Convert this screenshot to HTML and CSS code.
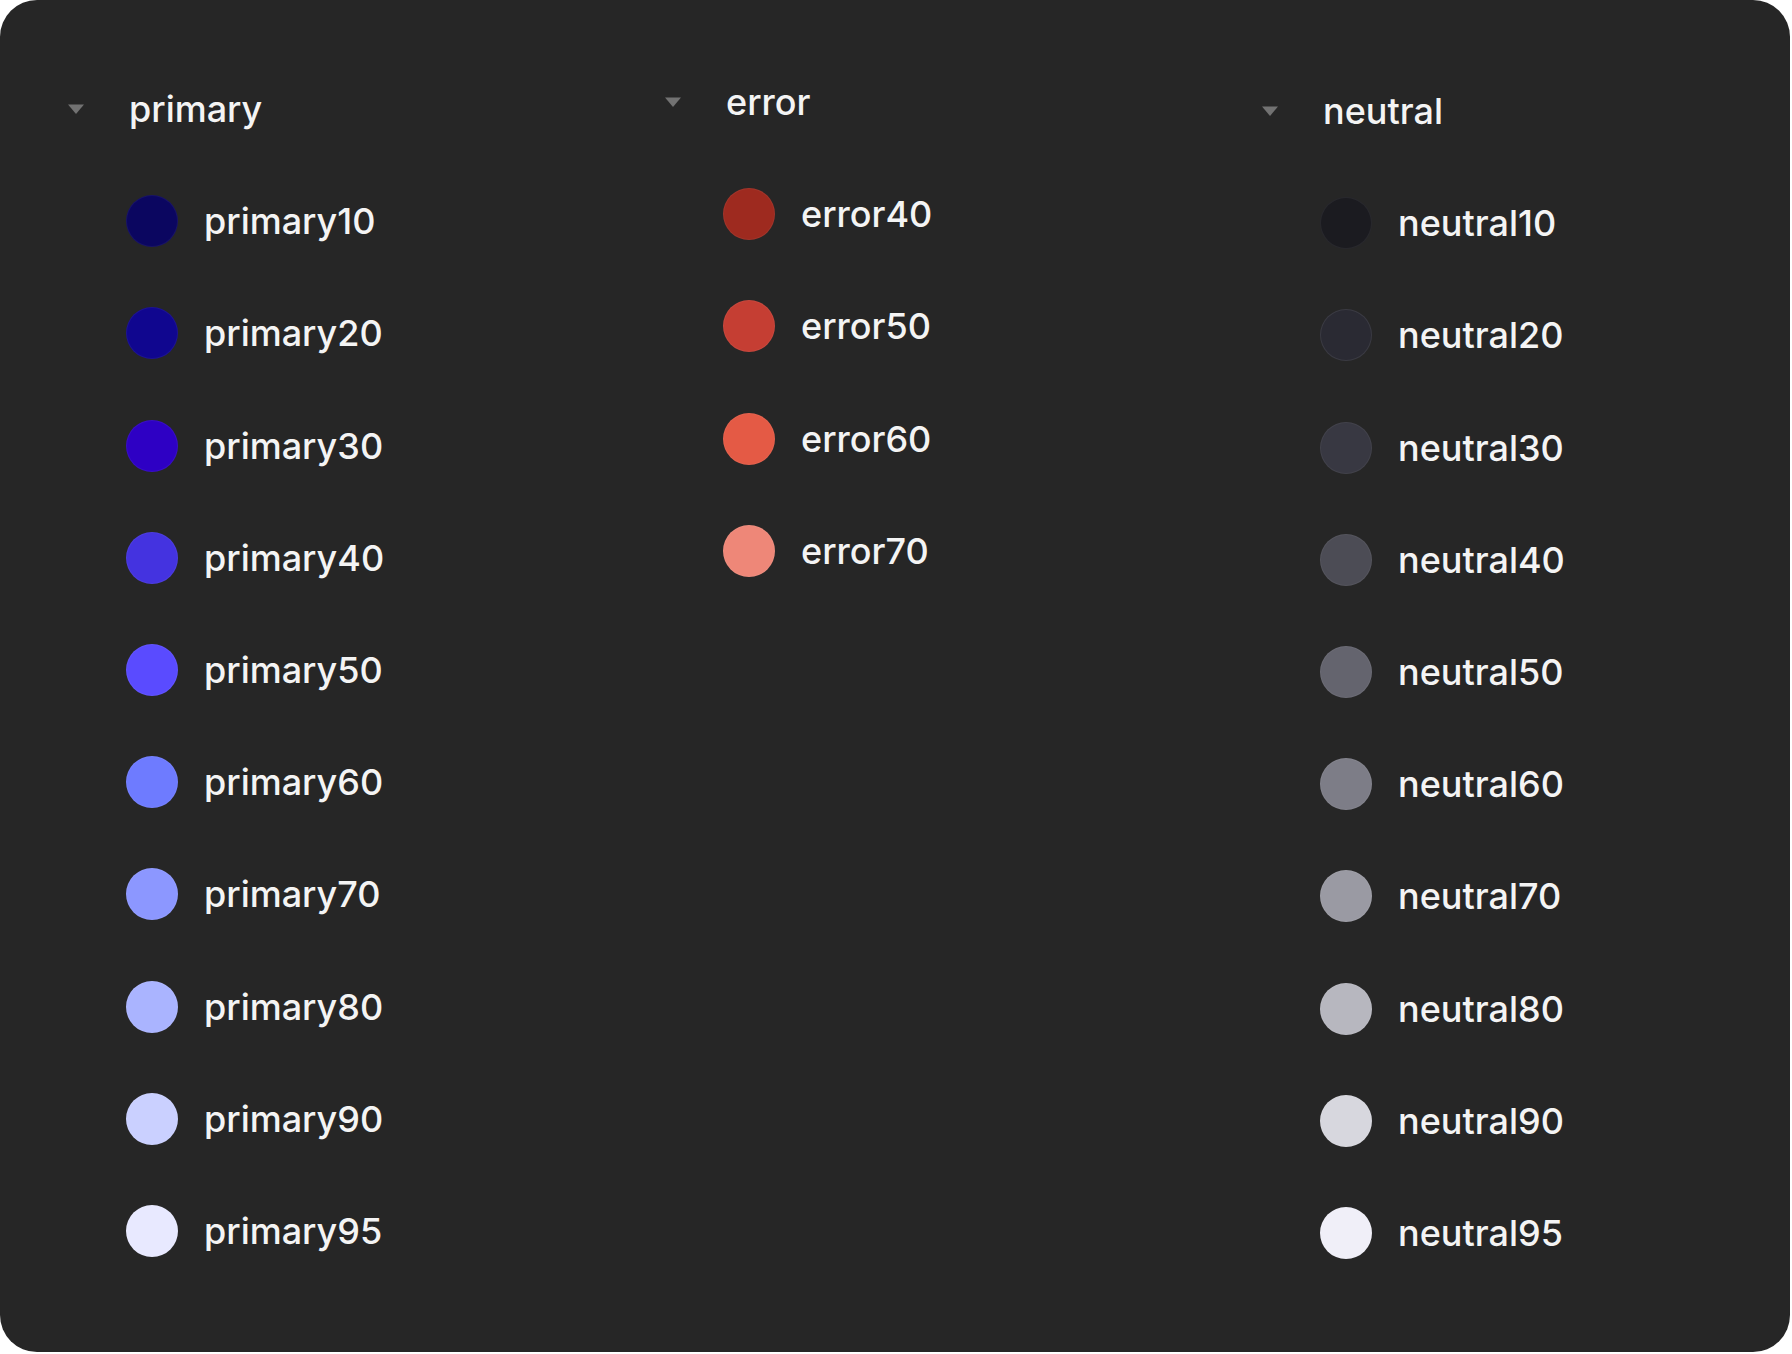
FILE: index.html
```html
<!DOCTYPE html>
<html lang="en">
<head>
<meta charset="utf-8">
<title>Color tokens</title>
<link rel="stylesheet" href="styles.css">
</head>
<body>
<div class="panel">
  <section class="group group-primary">
    <div class="group-head">
      <span class="caret"><svg viewBox="0 0 18 12" width="18" height="12"><polygon points="1,1.5 17,1.5 9,11" fill="#727272"/></svg></span>
      <span class="group-name">primary</span>
    </div>
    <ul class="swatches">
      <li class="swatch"><span class="dot p10"></span><span class="name">primary10</span></li>
      <li class="swatch"><span class="dot p20"></span><span class="name">primary20</span></li>
      <li class="swatch"><span class="dot p30"></span><span class="name">primary30</span></li>
      <li class="swatch"><span class="dot p40"></span><span class="name">primary40</span></li>
      <li class="swatch"><span class="dot p50"></span><span class="name">primary50</span></li>
      <li class="swatch"><span class="dot p60"></span><span class="name">primary60</span></li>
      <li class="swatch"><span class="dot p70"></span><span class="name">primary70</span></li>
      <li class="swatch"><span class="dot p80"></span><span class="name">primary80</span></li>
      <li class="swatch"><span class="dot p90"></span><span class="name">primary90</span></li>
      <li class="swatch"><span class="dot p95"></span><span class="name">primary95</span></li>
    </ul>
  </section>
  <section class="group group-error">
    <div class="group-head">
      <span class="caret"><svg viewBox="0 0 18 12" width="18" height="12"><polygon points="1,1.5 17,1.5 9,11" fill="#727272"/></svg></span>
      <span class="group-name">error</span>
    </div>
    <ul class="swatches">
      <li class="swatch"><span class="dot e40"></span><span class="name">error40</span></li>
      <li class="swatch"><span class="dot e50"></span><span class="name">error50</span></li>
      <li class="swatch"><span class="dot e60"></span><span class="name">error60</span></li>
      <li class="swatch"><span class="dot e70"></span><span class="name">error70</span></li>
    </ul>
  </section>
  <section class="group group-neutral">
    <div class="group-head">
      <span class="caret"><svg viewBox="0 0 18 12" width="18" height="12"><polygon points="1,1.5 17,1.5 9,11" fill="#727272"/></svg></span>
      <span class="group-name">neutral</span>
    </div>
    <ul class="swatches">
      <li class="swatch"><span class="dot n10"></span><span class="name">neutral10</span></li>
      <li class="swatch"><span class="dot n20"></span><span class="name">neutral20</span></li>
      <li class="swatch"><span class="dot n30"></span><span class="name">neutral30</span></li>
      <li class="swatch"><span class="dot n40"></span><span class="name">neutral40</span></li>
      <li class="swatch"><span class="dot n50"></span><span class="name">neutral50</span></li>
      <li class="swatch"><span class="dot n60"></span><span class="name">neutral60</span></li>
      <li class="swatch"><span class="dot n70"></span><span class="name">neutral70</span></li>
      <li class="swatch"><span class="dot n80"></span><span class="name">neutral80</span></li>
      <li class="swatch"><span class="dot n90"></span><span class="name">neutral90</span></li>
      <li class="swatch"><span class="dot n95"></span><span class="name">neutral95</span></li>
    </ul>
  </section>
</div>
</body>
</html>
```
FILE: styles.css
```css
html, body {
  margin: 0;
  padding: 0;
  background: #ffffff;
}

body {
  font-family: Inter, "Noto Sans", "Liberation Sans", sans-serif;
  -webkit-font-smoothing: antialiased;
}

.panel {
  box-sizing: border-box;
  width: 1790px;
  height: 1352px;
  background: #262626;
  border-radius: 37px;
  padding: 76px 0 0 67px;
  display: flex;
  align-items: flex-start;
}

.group {
  width: 597px;
  flex: 0 0 597px;
  display: flex;
  flex-direction: column;
  gap: 60.2px;
}

.group-primary { margin-top: 7px; }
.group-error { margin-top: 0; }
.group-neutral { margin-top: 9px; }

.group-head {
  display: flex;
  align-items: center;
  height: 52px;
}

.caret {
  width: 18px;
  height: 12px;
  margin-right: 44px;
  display: flex;
}

.group-name,
.name {
  font-size: 36px;
  font-weight: 500;
  line-height: 52px;
  color: #f4f4f4;
  letter-spacing: 0;
  white-space: nowrap;
}

.swatches {
  list-style: none;
  margin: 0;
  padding: 0;
  display: flex;
  flex-direction: column;
  gap: 60.2px;
}

.swatch {
  display: flex;
  align-items: center;
  height: 52px;
  padding-left: 59px;
}

.dot {
  box-sizing: border-box;
  width: 52px;
  height: 52px;
  border-radius: 50%;
  margin-right: 26px;
  flex: 0 0 52px;
  border: 1.5px solid rgba(255, 255, 255, 0.05);
}

.p10 { background: #0b0660; }
.p20 { background: #10068f; }
.p30 { background: #2e00c4; }
.p40 { background: #4433e0; }
.p50 { background: #5a4bff; }
.p60 { background: #6e7bff; }
.p70 { background: #8c97ff; }
.p80 { background: #aab4ff; }
.p90 { background: #cad0ff; }
.p95 { background: #e8e9ff; }

.e40 { background: #9e2a1f; }
.e50 { background: #c53e33; }
.e60 { background: #e45a45; }
.e70 { background: #ee8778; }

.n10 { background: #1b1b20; border-color: rgba(255, 255, 255, 0.06); }
.n20 { background: #2a2a33; border-color: rgba(255, 255, 255, 0.08); }
.n30 { background: #383842; }
.n40 { background: #4c4c55; }
.n50 { background: #64646e; }
.n60 { background: #7d7d87; }
.n70 { background: #9a9aa3; }
.n80 { background: #b7b7bf; }
.n90 { background: #d7d7de; }
.n95 { background: #f0eff8; }
```
